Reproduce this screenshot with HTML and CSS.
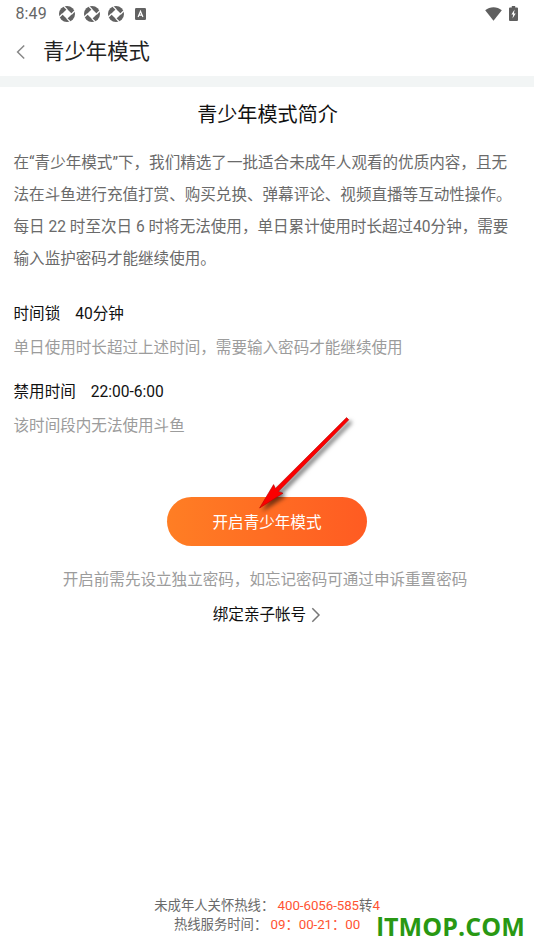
FILE: index.html
```html
<!DOCTYPE html>
<html lang="zh-CN">
<head>
<meta charset="utf-8">
<title>青少年模式</title>
<link rel="stylesheet" href="styles.css">
</head>
<body>
<svg width="0" height="0" class="defs">
  <symbol id="shutter" viewBox="0 0 16 16">
    <circle cx="8" cy="8" r="8" fill="#626262"/>
    <path d="M8 2.9 13.1 8 8 13.1 2.9 8Z" fill="#fff"/>
    <path d="M8.2 3.6 4.6.1M12.4 8.2 15.9 4.6M7.8 12.4 11.4 15.9M3.6 7.8.1 11.4" stroke="#fff" stroke-width="1.3"/>
  </symbol>
</svg>
<div class="status">
  <span class="clock">8:49</span>
  <svg class="app"><use href="#shutter"/></svg>
  <svg class="app"><use href="#shutter"/></svg>
  <svg class="app"><use href="#shutter"/></svg>
  <svg class="badge" viewBox="0 0 11 12"><rect width="11" height="12" rx="1.2" fill="#626262"/><path d="M3.1 9 5.5 3.2 7.9 9M4 7.2H7" fill="none" stroke="#fff" stroke-width="1.2"/></svg>
  <svg class="wifi" viewBox="0 0 17 14"><path d="M.2 3.3C5-.9 12-.9 16.8 3.3L8.5 13.8Z" fill="#5f5f5f"/></svg>
  <svg class="battery" viewBox="0 0 9 15"><path d="M2.8 0H6.2V1.5H8Q9 1.5 9 2.5V14Q9 15 8 15H1Q0 15 0 14V2.5Q0 1.5 1 1.5H2.8Z" fill="#5f5f5f"/><path d="M5.6 3.6 2.4 8.6H4.2L3.5 12.6 6.7 7.6H4.9Z" fill="#fff"/></svg>
</div>
<header class="nav">
  <svg class="back" viewBox="0 0 10 16"><path d="M8.2 1.5 1.6 8 8.2 14.5" fill="none" stroke="#888" stroke-width="1.5"/></svg>
  <h1>青少年模式</h1>
</header>
<main>
  <h2>青少年模式简介</h2>
  <p class="intro">在“青少年模式”下，我们精选了一批适合未成年人观看的优质内容，且无<br>法在斗鱼进行充值打赏、购买兑换、弹幕评论、视频直播等互动性操作。<br>每日 22 时至次日 6 时将无法使用，单日累计使用时长超过40分钟，需要<br>输入监护密码才能继续使用。</p>
  <section class="rule">
    <h3><span>时间锁</span><span>40分钟</span></h3>
    <p>单日使用时长超过上述时间，需要输入密码才能继续使用</p>
  </section>
  <section class="rule">
    <h3><span>禁用时间</span><span>22:00-6:00</span></h3>
    <p>该时间段内无法使用斗鱼</p>
  </section>
  <div class="action">
    <button class="start">开启青少年模式</button>
    <svg class="arrow" viewBox="250 410 110 110"><path d="M346.6 417.6 348.8 419.8 278.4 491.4 283 493.2 259.6 508 273.6 484.6 275.4 488.4Z" fill="#fb0000" stroke="#b80000" stroke-width=".6"/></svg>
  </div>
  <p class="hint">开启前需先设立独立密码，如忘记密码可通过申诉重置密码</p>
  <a class="bind">绑定亲子帐号<svg viewBox="0 0 10 16"><path d="M1.3 1.2 8 8 1.3 14.8" fill="none" stroke="#777" stroke-width="1.5"/></svg></a>
</main>
<footer>
  <p>未成年人关怀热线： <em>400-6056-585</em>转<em>4</em></p>
  <p>热线服务时间： <em>09：00-21：00</em></p>
  <strong class="mark"><span>I</span>TMOP.COM</strong>
</footer>
</body>
</html>
```
FILE: styles.css
```css
* { box-sizing: border-box; }
body {
  margin: 0;
  height: 950px;
  display: flex;
  flex-direction: column;
  background: #fff;
  color: #6a6a6a;
  font-family: Roboto, "Noto Sans CJK SC", sans-serif;
  font-size: 15.57px;
  overflow: hidden;
}
h1, h2, h3, p { margin: 0; font-weight: 400; white-space: nowrap; }
.defs { position: absolute; }
.status { height: 27px; display: flex; align-items: center; padding: 0 16px 0 15.5px; }
.clock { width: 43.5px; font-size: 16px; line-height: 28px; letter-spacing: .1px; color: #666; }
.app { width: 16px; height: 16px; margin-right: 8.5px; }
.badge { width: 11px; height: 12px; margin-left: 2px; }
.wifi { width: 17px; height: 14px; margin-left: auto; margin-right: 7px; }
.battery { width: 9px; height: 15px; }
.nav {
  height: 60px;
  display: flex;
  align-items: center;
  padding: 0 16px;
  border-bottom: 11px solid #f2f5f5;
}
.back { width: 10px; height: 16px; margin-right: 17px; }
h1 { font-size: 21.4px; line-height: 50px; color: #222; }
main { flex: 1; padding: 0 13.5px; display: flex; flex-direction: column; }
h2 { margin-top: 13px; text-align: center; text-indent: 1px; font-size: 20.1px; line-height: 30px; color: #111; }
.intro { margin-top: 17px; line-height: 32px; }
.rule { margin-top: 24px; }
.rule + .rule { margin-top: 12px; }
.rule h3 { display: flex; gap: 15px; font-size: 15.57px; line-height: 30px; color: #111; }
.rule p { padding-top: 2px; line-height: 34px; color: #9c9c9c; }
.action { position: relative; align-self: center; margin-top: 53.5px; }
.start {
  display: block;
  width: 200px;
  height: 49px;
  padding: 0 0 1px;
  border: 0;
  border-radius: 25px;
  background: linear-gradient(90deg, #ff7e24, #ff5b22);
  color: #fff;
  font: inherit;
}
.arrow {
  position: absolute;
  left: 83px;
  top: -86.5px;
  width: 110px;
  height: 110px;
  filter: drop-shadow(3px 3px 2px rgba(0, 0, 0, .55));
}
.hint { margin-top: 19.5px; padding-right: 4px; text-align: center; line-height: 30px; color: #9c9c9c; }
.bind {
  display: flex;
  align-items: center;
  align-self: center;
  gap: 5px;
  margin-top: 5px;
  line-height: 30px;
  color: #111;
}
.bind svg { width: 10px; height: 16px; margin-bottom: 1px; }
footer { position: relative; height: 54px; font-size: 13.35px; line-height: 19px; text-align: center; }
em { font-style: normal; color: #ff5433; letter-spacing: -.08px; }
.mark {
  position: absolute;
  right: 9px;
  bottom: 5px;
  font: 700 25px/34px "Open Sans", sans-serif;
  letter-spacing: .1px;
  color: #299813;
}
.mark span { font-family: Roboto, sans-serif; }
```
